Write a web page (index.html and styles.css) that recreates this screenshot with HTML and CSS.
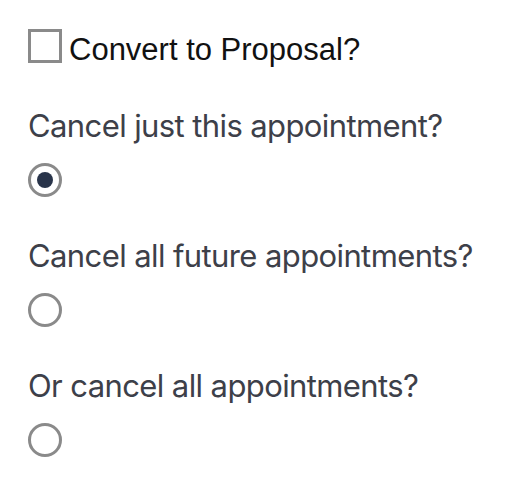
FILE: index.html
```html
<!DOCTYPE html>
<html lang="en">
<head>
<meta charset="utf-8">
<title>Cancel appointment</title>
<link rel="stylesheet" href="styles.css">
</head>
<body>
<form class="cancel-form">
  <label class="convert-row">
    <span class="checkbox"></span>
    <span class="convert-text">Convert to Proposal?</span>
  </label>
  <div class="question">
    <p class="question-label">Cancel just this appointment?</p>
    <span class="radio radio-checked"><span class="radio-dot"></span></span>
  </div>
  <div class="question">
    <p class="question-label">Cancel all future appointments?</p>
    <span class="radio"></span>
  </div>
  <div class="question">
    <p class="question-label">Or cancel all appointments?</p>
    <span class="radio"></span>
  </div>
</form>
</body>
</html>
```
FILE: styles.css
```css
html, body {
  margin: 0;
  padding: 0;
  background: #ffffff;
}

.cancel-form {
  display: flex;
  flex-direction: column;
  gap: 41px;
  padding: 29px 0 0 28px;
}

.convert-row {
  display: flex;
  align-items: flex-start;
  gap: 7px;
}

.checkbox {
  display: block;
  width: 34px;
  height: 34px;
  box-sizing: border-box;
  border: 3px solid #8a8a8a;
  background: #ffffff;
  flex: none;
}

.convert-text {
  font-family: "Liberation Sans", Arial, sans-serif;
  font-size: 31px;
  line-height: 34px;
  color: #111111;
  margin-top: 4px;
}

.question {
  display: flex;
  flex-direction: column;
  align-items: flex-start;
  gap: 19px;
}

.question-label {
  margin: 0;
  font-family: "Inter", "Liberation Sans", sans-serif;
  font-size: 31px;
  line-height: 36px;
  letter-spacing: -0.6px;
  color: #3d4049;
}

.radio {
  display: flex;
  align-items: center;
  justify-content: center;
  width: 34px;
  height: 34px;
  box-sizing: border-box;
  border: 3px solid #8a8a8a;
  border-radius: 50%;
  background: #ffffff;
}

.radio-dot {
  display: block;
  width: 16px;
  height: 16px;
  border-radius: 50%;
  background: #29344a;
}
```
